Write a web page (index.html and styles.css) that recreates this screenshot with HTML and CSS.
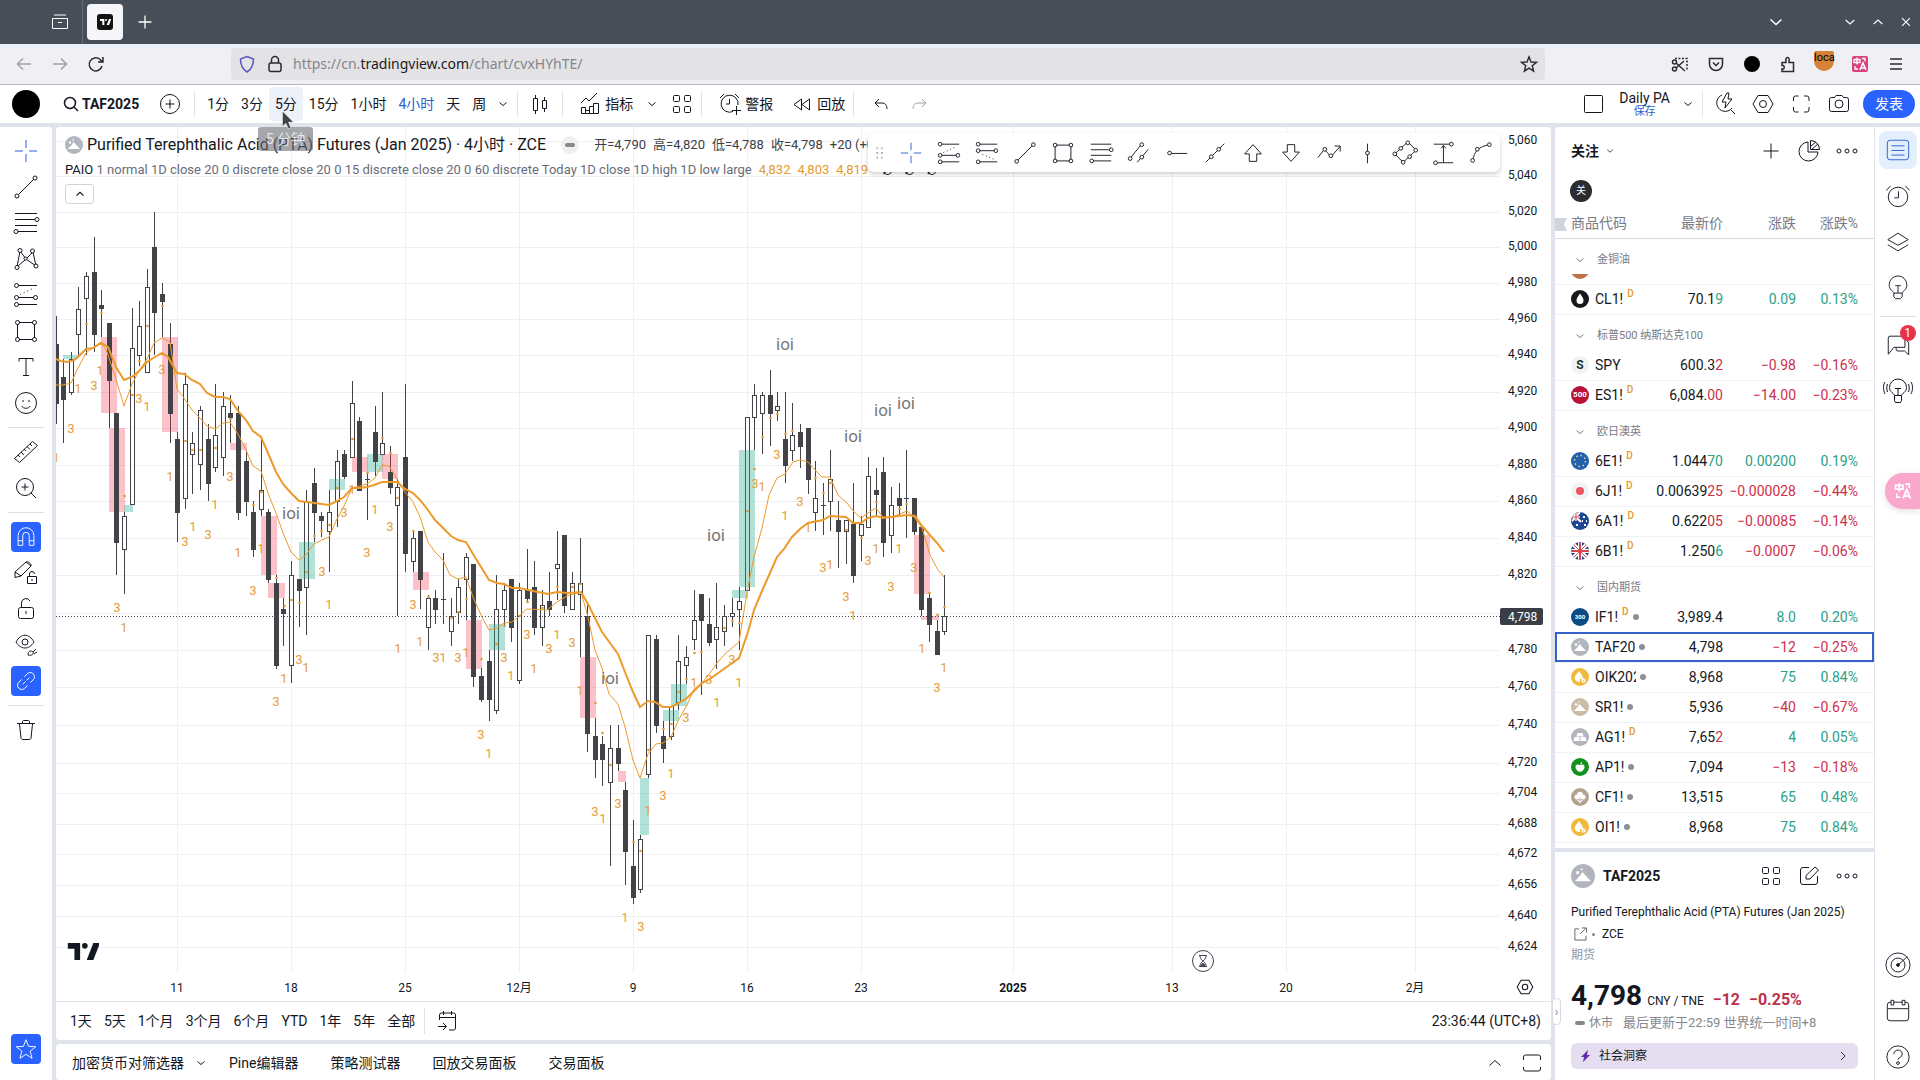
FILE: index.html
```html
<!DOCTYPE html>
<html lang="zh-CN">
<head>
<meta charset="utf-8">
<title>TAF2025 4,798</title>
<link rel="stylesheet" href="styles.css">
</head>
<body>
<svg class="defs" aria-hidden="true">
  <symbol id="cross" viewBox="0 0 28 28"><path d="M14 3v8M14 17v8M3 14h8M17 14h8"/></symbol>
  <symbol id="line" viewBox="0 0 28 28"><circle cx="5" cy="23" r="2"/><circle cx="23" cy="5" r="2"/><path d="M6.500 21.500l15-15"/></symbol>
  <symbol id="fib" viewBox="0 0 28 28"><path d="M3 4.500h22M3 10.500h20M3 16.500h22M5 22.500h20"/><circle cx="25" cy="10.500" r="2" class="bg"/><circle cx="4" cy="22.500" r="2" class="bg"/></symbol>
  <symbol id="xabcd" viewBox="0 0 28 28"><path d="M5 22L8 6l6 8 7-7 3 14-10-7z"/><circle cx="5" cy="22.500" r="2" class="bg"/><circle cx="8" cy="5.500" r="2" class="bg"/><circle cx="20.500" cy="6" r="2" class="bg"/><circle cx="24" cy="21" r="2" class="bg"/><circle cx="13.500" cy="13.500" r="1.500" class="bg"/></symbol>
  <symbol id="forecast" viewBox="0 0 28 28"><path d="M6 4.500h19M6 16.500h16M6 23.500h19"/><path d="M8 13.500L22 7" stroke-dasharray="1 3"/><circle cx="4.500" cy="4.500" r="2"/><circle cx="4.500" cy="16.500" r="2"/><circle cx="4.500" cy="23.500" r="2"/><circle cx="23.500" cy="16.500" r="2"/></symbol>
  <symbol id="forecast2" viewBox="0 0 28 28"><path d="M6 4.500h19M6 11.500h16M6 23.500h19"/><path d="M9 15.500L22 21" stroke-dasharray="1 3"/><circle cx="4.500" cy="4.500" r="2"/><circle cx="4.500" cy="11.500" r="2"/><circle cx="4.500" cy="23.500" r="2"/><circle cx="23.500" cy="11.500" r="2"/></symbol>
  <symbol id="rect" viewBox="0 0 28 28"><path d="M7 5.500h14M7 22.500h14M5.500 7v14M22.500 7v14"/><circle cx="5.500" cy="5.500" r="2"/><circle cx="22.500" cy="5.500" r="2"/><circle cx="5.500" cy="22.500" r="2"/><circle cx="22.500" cy="22.500" r="2"/></symbol>
  <symbol id="text" viewBox="0 0 28 28"><path d="M7 8.500V5.500h14v3M14 5.500v17M11 22.500h6"/></symbol>
  <symbol id="smile" viewBox="0 0 28 28"><circle cx="14" cy="14" r="10.500"/><path d="M10 17c1 3 7 3 8 0M11 11v2M17 11v2"/></symbol>
  <symbol id="ruler" viewBox="0 0 28 28"><path d="M2.500 20.500l18-17 5 4-18 17zM6 17l2 2M9 14l3 3M12 11l2 2M15 8.500l3 3M18 6l2 2"/></symbol>
  <symbol id="zoom" viewBox="0 0 28 28"><circle cx="13" cy="13" r="8.500"/><path d="M19 19l5 5M13 9.500v7M9.500 13h7"/></symbol>
  <symbol id="magnet" viewBox="0 0 28 28"><path d="M5.500 23V12.500a8.500 8.500 0 0 1 17 0V23h-5V12.500a3.500 3.500 0 0 0-7 0V23zM5.500 18h5M17.500 18h5"/></symbol>
  <symbol id="penlock" viewBox="0 0 28 28"><path d="M3 13l11-10c2-1 6 2 5 4L9 17l-6 1.500zM3 13l6 4M14 3l5 4"/><path d="M15.500 17.500h9v7h-9zM17.500 17v-2a2.500 2.500 0 0 1 5 0M20 20v2"/></symbol>
  <symbol id="lock" viewBox="0 0 28 28"><rect x="6.500" y="12.500" width="15" height="11" rx="2"/><path d="M9.500 12V8a4.500 4.500 0 0 1 8.500-2M14 16v3"/></symbol>
  <symbol id="eye" viewBox="0 0 28 28"><path d="M4 11c5-9 13-9 18 0-5 8-13 8-18 0z"/><circle cx="13" cy="11" r="3"/><path d="M16 24c0-4 3-5 5-3 1 2-1 4-5 3zM21 21l3-3M22 23l3-2"/></symbol>
  <symbol id="link" viewBox="0 0 28 28"><g transform="rotate(-45 14 14)"><path d="M12 9.500H7.500a4.500 4.500 0 0 0 0 9H12M16 9.500h4.500a4.500 4.500 0 0 1 0 9H16M9 14h4M15 14h4"/></g></symbol>
  <symbol id="trash" viewBox="0 0 28 28"><path d="M5 7.500h18M10.500 7V5.500c0-1 1-1 1-1h5s1 0 1 1V7M7.500 8l1.500 14c0 1 1 1.500 2 1.500h6c1 0 2-.5 2-1.500L20.500 8"/></symbol>
  <symbol id="star" viewBox="0 0 28 28"><path d="M14 4l2.800 7.200 7.700.4-6 4.800 2 7.600-6.500-4.300L7.500 24l2-7.600-6-4.800 7.700-.4z"/></symbol>
  <symbol id="channel" viewBox="0 0 28 28"><path d="M5 19L16 5.500M12 24L24 10"/><circle cx="4.500" cy="20" r="2" class="bg"/><circle cx="17" cy="5" r="2" class="bg"/><circle cx="17" cy="18.500" r="2" class="bg"/></symbol>
  <symbol id="ray" viewBox="0 0 28 28"><circle cx="6" cy="14" r="2"/><path d="M8 14.500h17"/></symbol>
  <symbol id="extline" viewBox="0 0 28 28"><path d="M4 24L24 4"/><circle cx="10" cy="18" r="2" class="bg"/><circle cx="18" cy="10" r="2" class="bg"/></symbol>
  <symbol id="arrowup" viewBox="0 0 28 28"><path d="M14 5l9 10h-5v8h-8v-8H5z"/></symbol>
  <symbol id="arrowdown" viewBox="0 0 28 28"><path d="M14 23l9-10h-5V5h-8v8H5z"/></symbol>
  <symbol id="path" viewBox="0 0 28 28"><path d="M2 19l7-9 7 8L26 7M20 6.500h6v6"/><circle cx="9.500" cy="10" r="2" class="bg"/><circle cx="16" cy="17" r="2" class="bg"/></symbol>
  <symbol id="vline" viewBox="0 0 28 28"><path d="M14.500 4v21"/><circle cx="14.500" cy="14" r="2" class="bg"/></symbol>
  <symbol id="rotrect" viewBox="0 0 28 28"><path d="M3 15L17 2l9 9-14 13z"/><circle cx="3" cy="15" r="2" class="bg"/><circle cx="17" cy="3" r="2" class="bg"/><circle cx="25.500" cy="11" r="2" class="bg"/><circle cx="12" cy="24" r="2" class="bg"/><circle cx="9.500" cy="9" r="2" class="bg"/><circle cx="19" cy="18" r="2" class="bg"/></symbol>
  <symbol id="range" viewBox="0 0 28 28"><path d="M4 4.500h17M8 24.500h17M14.500 24V6M12 9l2.500-3L17 9"/><circle cx="23" cy="4.500" r="2"/><circle cx="6" cy="24.500" r="2"/></symbol>
  <symbol id="curve" viewBox="0 0 28 28"><path d="M5 22c2-9 5-15 19-17"/><circle cx="5" cy="22" r="2" class="bg"/><circle cx="10" cy="10" r="2" class="bg"/><circle cx="23" cy="5" r="2" class="bg"/></symbol>
  <symbol id="grip" viewBox="0 0 28 28"><path d="M11 8v13M16 8v13" stroke-dasharray="2 3" stroke-width="2"/></symbol>
  <symbol id="search" viewBox="0 0 28 28"><circle cx="13" cy="13" r="5.500"/><path d="M17 17l4 4"/></symbol>
  <symbol id="pluscircle" viewBox="0 0 28 28"><circle cx="14" cy="14" r="9.500"/><path d="M14 9.500v9M9.500 14h9"/></symbol>
  <symbol id="chev" viewBox="0 0 28 28"><path d="M10.500 12.500l3.500 3 3.500-3"/></symbol>
  <symbol id="chevbig" viewBox="0 0 28 28"><path d="M8.500 11.500l5.500 5 5.500-5"/></symbol>
  <symbol id="chevup" viewBox="0 0 28 28"><path d="M8.500 16.500l5.500-5 5.500 5"/></symbol>
  <symbol id="close" viewBox="0 0 28 28"><path d="M9 9l10 10M19 9L9 19"/></symbol>
  <symbol id="plus" viewBox="0 0 28 28"><path d="M14 6.500v15M6.500 14h15"/></symbol>
  <symbol id="candles" viewBox="0 0 28 28"><path d="M7.500 8.500h4v12h-4zM9.500 5v3.500M9.500 20.500V24M16.500 10.500h4v8h-4zM18.500 7v3.500M18.500 18.500V22"/></symbol>
  <symbol id="indic" viewBox="0 0 28 28"><path d="M5.500 17.500h4v6h-4zM9.500 20.500h4v3h-4zM13.500 16.500h4v7h-4zM17.500 13.500h5v10h-5zM5 13l5-5 3 3 8-8"/></symbol>
  <symbol id="tiles" viewBox="0 0 28 28"><rect x="5.500" y="5.500" width="6" height="6" rx="1"/><rect x="16.500" y="5.500" width="6" height="6" rx="1"/><rect x="5.500" y="16.500" width="6" height="6" rx="1"/><rect x="16.500" y="16.500" width="6" height="6" rx="1"/></symbol>
  <symbol id="alarmadd" viewBox="0 0 28 28"><path d="M17 21.500A8.500 8.500 0 1 1 22 15M13.500 9v5H10M4 8l4-4M19 4l4 4M20.500 16v9M16 20.500h9"/></symbol>
  <symbol id="rewind" viewBox="0 0 28 28"><path d="M13.500 9v11L6 14.500zM21.500 9v11L14 14.500z"/></symbol>
  <symbol id="undo" viewBox="0 0 28 28"><path d="M12 9l-4 4 4 4M8 13h7c3 0 5 2 5 6"/></symbol>
  <symbol id="redo" viewBox="0 0 28 28"><path d="M17 9l4 4-4 4M21 13h-8c-3 0-5 2-5 6"/></symbol>
  <symbol id="square" viewBox="0 0 28 28"><rect x="5.500" y="5.500" width="18" height="17" rx="1"/></symbol>
  <symbol id="flash" viewBox="0 0 28 28"><path d="M11 5a8.500 8.500 0 1 0 10 13M20 20l4 4M16 3l-5 9h4l-1 6 7-9h-4l1-6z"/></symbol>
  <symbol id="hex" viewBox="0 0 28 28"><path d="M9 5.500h10l5 8.500-5 8.500H9L4 14z"/><circle cx="14" cy="14" r="3.500"/></symbol>
  <symbol id="full" viewBox="0 0 28 28"><path d="M6.500 11V8a2 2 0 0 1 2-2h3M17 6h3a2 2 0 0 1 2 2v3M22 17v3a2 2 0 0 1-2 2h-3M11.500 22h-3a2 2 0 0 1-2-2v-3"/></symbol>
  <symbol id="cam" viewBox="0 0 28 28"><path d="M4.500 9.500a2 2 0 0 1 2-2h3l1.500-2h6l1.500 2h3a2 2 0 0 1 2 2v10a2 2 0 0 1-2 2h-15a2 2 0 0 1-2-2z"/><circle cx="14" cy="14" r="4"/></symbol>
  <symbol id="pie" viewBox="0 0 28 28"><path d="M13 5a9.500 9.500 0 1 0 10 10H13z"/><path d="M15.500 12.500V3.500a9 9 0 0 1 9 9zM16 9l5-4M17 12l6-5"/></symbol>
  <symbol id="dots" viewBox="0 0 28 28"><circle cx="6" cy="14" r="2"/><circle cx="14" cy="14" r="2"/><circle cx="22" cy="14" r="2"/></symbol>
  <symbol id="edit" viewBox="0 0 28 28"><path d="M14 5.500H8a2.500 2.500 0 0 0-2.500 2.500v12A2.500 2.500 0 0 0 8 22.500h12a2.500 2.500 0 0 0 2.500-2.500v-6M11 17v-3.500L20 5l3.500 3L15 17z"/></symbol>
  <symbol id="list" viewBox="0 0 28 28"><rect x="2.500" y="3.500" width="23" height="21" rx="3"/><path d="M7 9.500h14M7 14.500h14M7 19.500h14"/></symbol>
  <symbol id="alarm" viewBox="0 0 28 28"><circle cx="14" cy="15" r="10.500"/><path d="M14.500 9v7H10M1.500 8L6 3M22 3l4.500 5"/></symbol>
  <symbol id="layers" viewBox="0 0 28 28"><path d="M3 11.500L14 4.500l11 7-11 6zM3 17l11 6.500L25 17"/></symbol>
  <symbol id="bulb" viewBox="0 0 28 28"><path d="M9.500 19.500c0-2-5-3-5-9a9.500 9.500 0 0 1 19 0c0 6-5 7-5 9zM9.500 19.500v4l2 2h5l2-2v-4M11 11.500h6M14 12v7"/></symbol>
  <symbol id="chat" viewBox="0 0 28 28"><path d="M3.500 24V6.500a2 2 0 0 1 2-2h14a2 2 0 0 1 2 2v10h-12zM12 17v1.500a2 2 0 0 0 2 2h7l4.500 4V12a2 2 0 0 0-2-2"/></symbol>
  <symbol id="live" viewBox="0 0 32 28"><path d="M12.500 18.500c0-2-5-3-5-8a8.500 8.500 0 0 1 17 0c0 5-5 6-5 8zM12.500 18.500v5l1 2h5l1-2v-5M13 11.500h6M16 12v6M3 5c-2 3-2 8 0 12M5.500 7c-1 3-1 5 0 8M29 5c2 3 2 8 0 12M26.500 7c1 3 1 5 0 8"/></symbol>
  <symbol id="target" viewBox="0 0 28 28"><circle cx="14" cy="14" r="13"/><circle cx="14" cy="14" r="7.500"/><path d="M14 14l10-9"/><circle cx="14" cy="14" r="1.500" fill="currentColor"/></symbol>
  <symbol id="cal" viewBox="0 0 28 28"><rect x="2.500" y="4.500" width="23" height="20" rx="3"/><path d="M3 11.500h22"/><path class="bg" d="M6.500 2.500h3v5h-3zM18.500 2.500h3v5h-3z"/></symbol>
  <symbol id="help" viewBox="0 0 28 28"><circle cx="14" cy="14" r="12"/><path d="M9.500 11c0-6 9-6 9 0 0 4-4.500 3-4.500 6"/><circle cx="14" cy="20.500" r="1.500"/></symbol>
  <symbol id="goto" viewBox="0 0 28 28"><path d="M5.500 13V8a2 2 0 0 1 2-2h12a2 2 0 0 1 2 2v13a2 2 0 0 1-2 2H15M5.500 10.500h16M9.500 4v4M17.500 4v4M4 19.500h8M9 16l3.500 3.500L9 23"/></symbol>
  <symbol id="maxi" viewBox="0 0 28 28"><path d="M5.500 11V8a2 2 0 0 1 2-2h13a2 2 0 0 1 2 2v3M22.500 18v2a2 2 0 0 1-2 2h-13a2 2 0 0 1-2-2v-2"/></symbol>
  <symbol id="ext" viewBox="0 0 28 28"><path d="M13 8.500H8.500v12h12V16M14 14l6-6M16 7.500h5v5"/></symbol>
  <symbol id="back" viewBox="0 0 28 28"><path d="M21 14H8M13 8.500L7.500 14l5.500 5.500"/></symbol>
  <symbol id="fwd" viewBox="0 0 28 28"><path d="M7 14h13M15 8.500l5.500 5.500-5.500 5.500"/></symbol>
  <symbol id="reload" viewBox="0 0 28 28"><path d="M20 16a6.500 6.500 0 1 1-2-6.500l2 2M21 7v5h-5"/></symbol>
  <symbol id="shield" viewBox="0 0 28 28"><path d="M14 6.500l6.500 2.500c0 6-1.500 10-6.500 13-5-3-6.500-7-6.500-13z"/></symbol>
  <symbol id="padlock" viewBox="0 0 28 28"><rect x="8" y="13" width="12" height="8.500" rx="2"/><path d="M10.500 13v-3a3.500 3.500 0 0 1 7 0v3"/></symbol>
  <symbol id="store" viewBox="0 0 28 28"><path d="M8 7h12M6.500 10.500h15v10h-15zM12 14.500h4"/></symbol>
  <symbol id="scissors" viewBox="0 0 28 28"><path d="M9 8.500h12v11" stroke-dasharray="2 1.500"/><circle cx="8.500" cy="12" r="2"/><circle cx="8.500" cy="19" r="2"/><path d="M10 13l9 8M10 18l8-7"/></symbol>
  <symbol id="pocket" viewBox="0 0 28 28"><path d="M7.500 8.500h13V14a6.500 6.500 0 0 1-13 0zM11 12.500l3 3 3-3"/></symbol>
  <symbol id="puzzle" viewBox="0 0 28 28"><path d="M8 12.500h4c0-1.500-1-5 1.500-5s1.500 3.500 1.500 5h4.500v9H8v-2.500c3 1 3-4.500 0-3.500z"/></symbol>
  <symbol id="menu" viewBox="0 0 28 28"><path d="M8 9h12M8 14h12M8 19h12"/></symbol>
  <symbol id="tv" viewBox="0 0 36 28"><path fill="currentColor" stroke="none" d="M3 5h13v18H10V11H3zM30 5h7l-7 18h-7z"/><circle cx="21" cy="8" r="3" fill="currentColor" stroke="none"/></symbol>
  <symbol id="mount" viewBox="0 0 18 18"><path fill="#fff" stroke="none" d="M3 13l4-4.500 1.500-2.500 6.500 7z"/><circle cx="5" cy="6.500" r="1.200" fill="#fff" stroke="none"/><circle cx="8" cy="4" r=".8" fill="#fff" stroke="none"/></symbol>
  <symbol id="drop" viewBox="0 0 18 18"><path fill="#fff" stroke="none" d="M9 3.500c2 3 3.500 4.500 3.500 7a3.500 3.500 0 0 1-7 0c0-2.500 1.500-4 3.500-7z"/></symbol>
  <symbol id="oil" viewBox="0 0 18 18"><path fill="#fff" stroke="none" d="M8 3c2 3 4 4.500 4 8H9v3c-6 0-6-5-4-7z"/><circle cx="12.500" cy="12.500" r="2.200" fill="#fff" stroke="none"/><path d="M11.500 13.500l2-2" stroke="#f0b93c"/></symbol>
  <symbol id="bars3" viewBox="0 0 18 18"><path fill="#fff" stroke="none" d="M6.500 5h5l1.200 3.500H5.300zM3.500 9h4.800L9 13H2.500zM9.700 9h4.800l1 4H9.500z"/></symbol>
  <symbol id="apple" viewBox="0 0 18 18"><path fill="#fff" stroke="none" d="M9 7c5-2 5 2 4 4-2 3-3 3-4 2.500-1 .5-2 .5-4-2.500-1-2-1-6 4-4zM9 6.500l1.500-3 .5 2z"/></symbol>
  <symbol id="cotton" viewBox="0 0 18 18"><circle cx="6" cy="9" r="2.500" fill="#fff" stroke="none"/><circle cx="9" cy="6.500" r="2.800" fill="#fff" stroke="none"/><circle cx="12" cy="9" r="2.500" fill="#fff" stroke="none"/><path stroke="#fff" d="M9 8v7M6 12l3 2 3-2"/></symbol>
  <symbol id="eu" viewBox="0 0 18 18"><circle cx="9" cy="9" r="5.500" fill="none" stroke="#ffe066" stroke-width="1.500" stroke-dasharray="1.400 2.900"/></symbol>
  <symbol id="jp" viewBox="0 0 18 18"><circle cx="9" cy="9" r="4" fill="#ef5461" stroke="none"/></symbol>
  <symbol id="uk" viewBox="0 0 18 18"><path d="M2 2l14 14M16 2L2 16M9 0v18M0 9h18" stroke="#fff" stroke-width="4"/><path d="M2 2l14 14M16 2L2 16" stroke="#d8454f"/><path d="M9 0v18M0 9h18" stroke="#d8454f" stroke-width="2"/></symbol>
  <symbol id="au" viewBox="0 0 18 18"><path d="M0 0l10 10M9 0L1 9M0 5h9M5 0v9" stroke="#fff" stroke-width="2"/><path d="M0 5h9M5 0v9" stroke="#d8454f"/><path d="M5 13h2M12 5h2M13 13h2M11 9h1M15 9h1" stroke="#fff" stroke-width="2"/></symbol>
  <symbol id="translate" viewBox="0 0 16 16"><path d="M2 3.500h6v3H2zM5 1.500v7M10 2.500h3v3M3 10v3h3" stroke-width="1.300"/><path d="M8 14l3-7 3 7M9 12h4" stroke-width="1.500"/></symbol>
  <symbol id="hourglass" viewBox="0 0 28 28"><circle cx="14" cy="14" r="10.500" fill="#fff"/><path d="M10 8.500h8M10 19.500h8M11 9c0 3 2 4 3 5-1 1-3 2-3 5M17 9c0 3-2 4-3 5 1 1 3 2 3 5"/><path d="M12 18.500h4l-2-2.500z" fill="currentColor"/></symbol>
</svg>

<header class="tabbar">
  <button class="ib store" aria-label="归档"><svg><use href="#store"/></svg></button>
  <div class="tab"><span class="tvfav"><svg><use href="#tv"/></svg></span></div>
  <button class="ib newtab" aria-label="新标签页"><svg><use href="#plus"/></svg></button>
  <span class="grow"></span>
  <button class="ib alltabs" aria-label="所有标签页"><svg><use href="#chevbig"/></svg></button>
  <button class="ib wbtn" aria-label="最小化"><svg><use href="#chevbig"/></svg></button>
  <button class="ib wbtn" aria-label="最大化"><svg><use href="#chevup"/></svg></button>
  <button class="ib wbtn" aria-label="关闭"><svg><use href="#close"/></svg></button>
</header>

<nav class="navbar">
  <button class="ib nb dim" aria-label="后退"><svg><use href="#back"/></svg></button>
  <button class="ib nb dim" aria-label="前进"><svg><use href="#fwd"/></svg></button>
  <button class="ib nb" aria-label="刷新"><svg><use href="#reload"/></svg></button>
  <div class="url">
    <svg class="shield"><use href="#shield"/></svg><svg><use href="#padlock"/></svg>
    <a href="#chart"><span>https://cn.</span><b>tradingview.com</b><span>/chart/cvxHYhTE/</span></a>
    <span class="grow"></span><svg class="fav"><use href="#star"/></svg>
  </div>
  <div class="exts">
    <button class="ib nb" aria-label="截图"><svg><use href="#scissors"/></svg></button>
    <button class="ib nb" aria-label="Pocket"><svg><use href="#pocket"/></svg></button>
    <button class="ib nb" aria-label="账户"><span class="blackdot"></span></button>
    <button class="ib nb" aria-label="扩展"><svg><use href="#puzzle"/></svg></button>
    <button class="ib nb fox"><span>loca</span></button>
    <button class="ib nb trans" aria-label="翻译"><svg><use href="#translate"/></svg></button>
    <button class="ib nb" aria-label="菜单"><svg><use href="#menu"/></svg></button>
  </div>
</nav>

<div class="topbar">
  <span class="avatar"></span>
  <button class="symbol"><svg><use href="#search"/></svg><b>TAF2025</b></button>
  <button class="ib w38" aria-label="比较"><svg><use href="#pluscircle"/></svg></button>
  <i class="sep first"></i>
  <button class="iv">1分</button><button class="iv">3分</button><button class="iv hover">5分</button><button class="iv">15分</button><button class="iv">1小时</button><button class="iv on">4小时</button><button class="iv">天</button><button class="iv">周</button>
  <button class="ib w22" aria-label="更多周期"><svg><use href="#chev"/></svg></button>
  <i class="sep"></i>
  <button class="ib w38" aria-label="K线"><svg><use href="#candles"/></svg></button>
  <i class="sep"></i>
  <button class="lab"><svg><use href="#indic"/></svg>指标</button>
  <button class="ib w38" aria-label="指标模板"><svg><use href="#chev"/></svg></button>
  <button class="ib w22" aria-label="布局"><svg><use href="#tiles"/></svg></button>
  <i class="sep wide"></i>
  <button class="lab alert"><svg><use href="#alarmadd"/></svg>警报</button>
  <button class="lab replay"><svg><use href="#rewind"/></svg>回放</button>
  <i class="sep wide"></i>
  <button class="ib w38" aria-label="撤销"><svg><use href="#undo"/></svg></button>
  <button class="ib w38 dim" aria-label="重做"><svg><use href="#redo"/></svg></button>
  <span class="grow"></span>
  <button class="ib w38" aria-label="布局设置"><svg><use href="#square"/></svg></button>
  <button class="layout"><span>Daily PA</span><small>保存</small></button>
  <button class="ib w22" aria-label="管理布局"><svg><use href="#chev"/></svg></button>
  <i class="sep"></i>
  <button class="ib w38" aria-label="快速搜索"><svg><use href="#flash"/></svg></button>
  <button class="ib w38" aria-label="设置"><svg><use href="#hex"/></svg></button>
  <button class="ib w38" aria-label="全屏"><svg><use href="#full"/></svg></button>
  <button class="ib w38" aria-label="快照"><svg><use href="#cam"/></svg></button>
  <button class="publish">发表</button>
</div>

<div class="main">
  <aside class="tools">
    <button class="tool blue" aria-label="十字"><svg><use href="#cross"/></svg></button>
    <button class="tool" aria-label="趋势线"><svg><use href="#line"/></svg></button>
    <button class="tool" aria-label="斐波那契"><svg><use href="#fib"/></svg></button>
    <button class="tool" aria-label="形态"><svg><use href="#xabcd"/></svg></button>
    <button class="tool" aria-label="预测"><svg><use href="#forecast"/></svg></button>
    <button class="tool" aria-label="矩形"><svg><use href="#rect"/></svg></button>
    <button class="tool" aria-label="文字"><svg><use href="#text"/></svg></button>
    <button class="tool" aria-label="图标"><svg><use href="#smile"/></svg></button>
    <hr>
    <button class="tool" aria-label="测量"><svg><use href="#ruler"/></svg></button>
    <button class="tool" aria-label="放大"><svg><use href="#zoom"/></svg></button>
    <hr>
    <button class="tool" aria-label="磁铁"><span class="fill"><svg><use href="#magnet"/></svg></span></button>
    <button class="tool" aria-label="保持绘图"><svg><use href="#penlock"/></svg></button>
    <button class="tool" aria-label="锁定"><svg><use href="#lock"/></svg></button>
    <button class="tool" aria-label="隐藏"><svg><use href="#eye"/></svg></button>
    <button class="tool" aria-label="同步"><span class="fill"><svg><use href="#link"/></svg></span></button>
    <hr>
    <button class="tool" aria-label="删除"><svg><use href="#trash"/></svg></button>
    <span class="grow"></span>
    <button class="tool last" aria-label="收藏工具栏"><span class="fill"><svg><use href="#star"/></svg></span></button>
  </aside>

  <div class="center">
    <section class="chartbox" id="chart">
      <div class="plot">
        <svg class="plotsvg" id="plot" viewBox="56 127 1495 874" preserveAspectRatio="xMinYMin meet"></svg>
        <div class="legend">
          <div class="l1">
            <span class="logo gray"><svg><use href="#mount"/></svg></span>
            <span class="title">Purified Terephthalic Acid (PTA) Futures (Jan 2025) · 4小时 · ZCE</span>
            <span class="status"><i></i></span>
            <span class="ohlc"><span>开=4,790</span><span>高=4,820</span><span>低=4,788</span><span>收=4,798</span><span>+20 (+0.42%)</span></span>
          </div>
          <div class="l2"><span><b>PAIO</b> 1 normal 1D close 20 0 discrete close 20 0 15 discrete close 20 0 60 discrete Today 1D close 1D high 1D low large</span><em>4,832</em><em>4,803</em><em>4,819</em><span class="nil"><span>∅</span><span>∅</span><span>∅</span></span></div>
          <button class="fold" aria-label="收起"><svg><use href="#chevup"/></svg></button>
        </div>
        <div class="floatbar">
          <span class="grip"><svg><use href="#grip"/></svg></span>
          <button class="blue" aria-label="十字"><svg><use href="#cross"/></svg></button>
          <button aria-label="多头"><svg><use href="#forecast"/></svg></button>
          <button aria-label="空头"><svg><use href="#forecast2"/></svg></button>
          <button aria-label="趋势线"><svg><use href="#line"/></svg></button>
          <button aria-label="矩形"><svg><use href="#rect"/></svg></button>
          <button aria-label="斐波那契"><svg><use href="#fib"/></svg></button>
          <button aria-label="平行通道"><svg><use href="#channel"/></svg></button>
          <button aria-label="水平射线"><svg><use href="#ray"/></svg></button>
          <button aria-label="延长线"><svg><use href="#extline"/></svg></button>
          <button aria-label="向上箭头"><svg><use href="#arrowup"/></svg></button>
          <button aria-label="向下箭头"><svg><use href="#arrowdown"/></svg></button>
          <button aria-label="路径"><svg><use href="#path"/></svg></button>
          <button aria-label="垂直线"><svg><use href="#vline"/></svg></button>
          <button aria-label="旋转矩形"><svg><use href="#rotrect"/></svg></button>
          <button aria-label="价格范围"><svg><use href="#range"/></svg></button>
          <button aria-label="曲线"><svg><use href="#curve"/></svg></button>
        </div>
        <svg class="tvlogo"><use href="#tv"/></svg>
        <svg class="axisgear"><use href="#hex"/></svg>
      </div>
      <div class="rangebar">
        <button>1天</button><button>5天</button><button>1个月</button><button>3个月</button><button>6个月</button><button>YTD</button><button>1年</button><button>5年</button><button>全部</button>
        <i class="sep"></i>
        <button class="ib" aria-label="前往"><svg><use href="#goto"/></svg></button>
        <span class="grow"></span>
        <button>23:36:44 (UTC+8)</button>
      </div>
    </section>
    <footer class="dock">
      <button>加密货币对筛选器<svg><use href="#chev"/></svg></button>
      <button>Pine编辑器</button><button>策略测试器</button><button>回放交易面板</button><button>交易面板</button>
      <span class="grow"></span>
      <button class="ib w38" aria-label="展开"><svg><use href="#chevup"/></svg></button>
      <button class="ib w38" aria-label="最大化"><svg><use href="#maxi"/></svg></button>
    </footer>
  </div>

  <aside class="panel">
    <button class="handle" aria-label="收起面板">›</button>
    <section class="watch">
      <div class="whead"><b>关注</b><svg class="s22"><use href="#chev"/></svg><span class="grow"></span>
        <button class="ib w38" aria-label="添加"><svg><use href="#plus"/></svg></button><button class="ib w38" aria-label="高级视图"><svg><use href="#pie"/></svg></button><button class="ib w38" aria-label="更多"><svg><use href="#dots"/></svg></button></div>
      <div class="wtag"><span>关</span></div>
      <table>
        <colgroup><col class="c1"><col class="c2"><col class="c3"><col class="c4"></colgroup>
        <thead><tr><th>商品代码</th><th>最新价</th><th>涨跌</th><th>涨跌%</th></tr></thead>
        <tbody>
          <tr class="grp"><th colspan="4"><svg><use href="#chev"/></svg>金铜油</th></tr>
          <tr class="cut"><td colspan="4"><div><span class="logo copper"></span></div></td></tr>
          <tr><td><div class="sym"><span class="logo black"><svg><use href="#drop"/></svg></span><span>CL1!</span><sup>D</sup></div></td><td>70.1<i class="up">9</i></td><td class="up">0.09</td><td class="up">0.13%</td></tr>
          <tr class="grp"><th colspan="4"><svg><use href="#chev"/></svg>标普500 纳斯达克100</th></tr>
          <tr><td><div class="sym"><span class="logo spy">S</span><span>SPY</span></div></td><td>600.3<i class="dn">2</i></td><td class="dn">−0.98</td><td class="dn">−0.16%</td></tr>
          <tr><td><div class="sym"><span class="logo red">500</span><span>ES1!</span><sup>D</sup></div></td><td>6,084.<i class="dn">00</i></td><td class="dn">−14.00</td><td class="dn">−0.23%</td></tr>
          <tr class="grp"><th colspan="4"><svg><use href="#chev"/></svg>欧日澳英</th></tr>
          <tr><td><div class="sym"><span class="logo eu"><svg><use href="#eu"/></svg></span><span>6E1!</span><sup>D</sup></div></td><td>1.044<i class="up">70</i></td><td class="up">0.00200</td><td class="up">0.19%</td></tr>
          <tr><td><div class="sym"><span class="logo spy"><svg><use href="#jp"/></svg></span><span>6J1!</span><sup>D</sup></div></td><td>0.00639<i class="dn">25</i></td><td class="dn">−0.000028</td><td class="dn">−0.44%</td></tr>
          <tr><td><div class="sym"><span class="logo navy"><svg><use href="#au"/></svg></span><span>6A1!</span><sup>D</sup></div></td><td>0.622<i class="dn">05</i></td><td class="dn">−0.00085</td><td class="dn">−0.14%</td></tr>
          <tr><td><div class="sym"><span class="logo navy"><svg><use href="#uk"/></svg></span><span>6B1!</span><sup>D</sup></div></td><td>1.250<i class="up">6</i></td><td class="dn">−0.0007</td><td class="dn">−0.06%</td></tr>
          <tr class="grp"><th colspan="4"><svg><use href="#chev"/></svg>国内期货</th></tr>
          <tr><td><div class="sym"><span class="logo blue3">300</span><span>IF1!</span><sup>D</sup><u></u></div></td><td>3,989.4</td><td class="up">8.0</td><td class="up">0.20%</td></tr>
          <tr class="sel"><td><div class="sym"><span class="logo gray"><svg><use href="#mount"/></svg></span><span class="nm">TAF20</span><u></u></div></td><td>4,798</td><td class="dn">−12</td><td class="dn">−0.25%</td></tr>
          <tr><td><div class="sym"><span class="logo gold"><svg><use href="#oil"/></svg></span><span class="nm">OIK2025</span><u></u></div></td><td>8,968</td><td class="up">75</td><td class="up">0.84%</td></tr>
          <tr><td><div class="sym"><span class="logo sand"><svg><use href="#mount"/></svg></span><span>SR1!</span><u></u></div></td><td>5,936</td><td class="dn">−40</td><td class="dn">−0.67%</td></tr>
          <tr><td><div class="sym"><span class="logo gray"><svg><use href="#bars3"/></svg></span><span>AG1!</span><sup>D</sup></div></td><td>7,65<i class="dn">2</i></td><td class="up">4</td><td class="up">0.05%</td></tr>
          <tr><td><div class="sym"><span class="logo green"><svg><use href="#apple"/></svg></span><span>AP1!</span><u></u></div></td><td>7,094</td><td class="dn">−13</td><td class="dn">−0.18%</td></tr>
          <tr><td><div class="sym"><span class="logo brown"><svg><use href="#cotton"/></svg></span><span>CF1!</span><u></u></div></td><td>13,515</td><td class="up">65</td><td class="up">0.48%</td></tr>
          <tr><td><div class="sym"><span class="logo gold"><svg><use href="#oil"/></svg></span><span>OI1!</span><u></u></div></td><td>8,968</td><td class="up">75</td><td class="up">0.84%</td></tr>
        </tbody>
      </table>
      <i class="flag"></i>
    </section>
    <section class="detail">
      <div class="dhead"><span class="logo big gray"><svg><use href="#mount"/></svg></span><b>TAF2025</b><span class="grow"></span>
        <button class="ib w38" aria-label="视图"><svg><use href="#tiles"/></svg></button><button class="ib w38" aria-label="备注"><svg><use href="#edit"/></svg></button><button class="ib w38" aria-label="更多"><svg><use href="#dots"/></svg></button></div>
      <p>Purified Terephthalic Acid (PTA) Futures (Jan 2025)</p>
      <p class="ex"><svg><use href="#ext"/></svg><i></i>ZCE</p>
      <p class="kind">期货</p>
      <div class="price"><strong>4,798</strong><small>CNY / TNE</small><b>−12</b><b>−0.25%</b></div>
      <p class="state"><i></i><span>休市</span><span>最后更新于22:59 世界统一时间+8</span></p>
      <button class="insight"><svg viewBox="0 0 12 12"><path d="M8 0L1 7h3L3 12l7-7H7z"/></svg>社会洞察<span class="grow"></span><svg viewBox="0 0 12 12" class="arr"><path d="M4 2l4 4-4 4"/></svg></button>
    </section>
  </aside>

  <aside class="rail">
    <button class="active" aria-label="自选表"><svg><use href="#list"/></svg></button>
    <button aria-label="警报"><svg><use href="#alarm"/></svg></button>
    <button aria-label="对象树"><svg><use href="#layers"/></svg></button>
    <button aria-label="观点"><svg><use href="#bulb"/></svg></button>
    <hr>
    <button aria-label="聊天"><svg><use href="#chat"/></svg><span class="badge">1</span></button>
    <button aria-label="直播"><svg class="w32"><use href="#live"/></svg></button>
    <span class="grow"></span>
    <button aria-label="筛选器"><svg><use href="#target"/></svg></button>
    <button aria-label="日历"><svg><use href="#cal"/></svg></button>
    <button aria-label="帮助"><svg><use href="#help"/></svg></button>
    <button class="fab" aria-label="翻译"><svg><use href="#translate"/></svg></button>
  </aside>
</div>

<div class="tip">5 分钟</div>
<svg class="cursor" viewBox="0 0 12 18"><path d="M1 1v14l3-3 2.500 5 2-1L6.500 11H11z"/></svg>
<script src="chart.js"></script>
</body>
</html>
```
FILE: styles.css
```css
* { box-sizing: border-box; }
body { margin: 0; height: 100vh; overflow: hidden; display: flex; flex-direction: column; background: #e0e3eb; color: #131722; font: 14px/20px Roboto, "Noto Sans CJK SC", sans-serif; }
button { border: 0; background: none; padding: 0; margin: 0; font: inherit; color: inherit; display: flex; align-items: center; justify-content: center; white-space: nowrap; flex: none; }
svg { width: 28px; height: 28px; flex: none; fill: none; stroke: currentColor; }
svg .bg { fill: #fff; }
p { margin: 0; }
.defs { position: absolute; width: 0; height: 0; }
.grow { flex: 1; }
.dim { opacity: .4; }
.w38 { width: 38px; }
.w22 { width: 22px; }
.sep { width: 1px; height: 26px; background: #e0e3eb; margin: 0 3px; flex: none; }
.sep.wide { margin: 0 8px; }
.sep.first { margin: 0 6px 0 5px; }

.tabbar { height: 44px; background: #474e57; color: #fff; display: flex; align-items: center; flex: none; }
.store { width: 83px; height: 44px; padding-left: 38px; border-right: 1px solid #666d76; }
.tab { width: 36px; height: 36px; margin-left: 4px; border-radius: 4px; background: #f5f5fa; display: flex; align-items: center; justify-content: center; }
.tvfav { width: 16px; height: 16px; border-radius: 3px; background: #131313; display: flex; align-items: center; justify-content: center; }
.tvfav svg { width: 12px; height: 12px; }
.newtab { width: 44px; }
.newtab svg { width: 24px; height: 24px; stroke-width: 1.500; }
.alltabs { width: 60px; margin-right: 30px; }
.alltabs svg { stroke-width: 1.500; }
.wbtn { width: 28px; }
.wbtn svg { width: 22px; height: 22px; stroke-width: 1.500; }

.navbar { height: 41px; background: #f0f0f4; box-shadow: inset 0 4px #eaf0f9; border-bottom: 1px solid #b8b8bd; display: flex; align-items: center; flex: none; padding: 0 6px; color: #2b2a33; }
.nb { width: 36px; }
.nb svg { stroke-width: 1.500; }
.url { flex: 1; height: 32px; margin: 0 117px; background: #e3e3e6; border-radius: 3px; display: flex; align-items: center; padding: 0 6px 0 2px; font: 14px/20px "Noto Sans", sans-serif; }
.url a { color: #85858d; text-decoration: none; margin-left: 4px; }
.url a b { color: #1c1b22; font-weight: 400; }
.url svg { stroke-width: 1.500; }
.url .fav { width: 20px; height: 20px; stroke-width: 2; }
.shield { color: #5b55c8; }
.exts { display: flex; align-items: center; }
.blackdot { width: 16px; height: 16px; border-radius: 50%; background: #000; }
.fox span { width: 20px; height: 20px; background: #d58238; color: #000; font-size: 11px; line-height: 13px; border-radius: 2px 2px 10px 10px; display: block; margin-bottom: 6px; }
.trans svg { width: 16px; height: 16px; background: #d8427f; color: #fff; border-radius: 2px; }

.topbar { height: 38px; background: #fff; display: flex; align-items: center; flex: none; padding: 0 5px 0 12px; }
.avatar { width: 28px; height: 28px; border-radius: 50%; background: #000; flex: none; margin-right: 17px; }
.symbol svg { margin-right: -3px; stroke-width: 1.500; }
.symbol b { font-weight: 700; }
.symbol { margin-right: 12px; }
.iv { height: 34px; padding: 0 6px; }
.iv.on { color: #2a5fd0; }
.iv.hover { background: #edf1f9; border-radius: 4px; }
.lab { padding-left: 10px; gap: 1px; }
.alert { padding-left: 6px; }
.replay { padding-left: 15px; }
.layout { flex-direction: column; line-height: 16px; padding: 0 7px; }
.layout small { font-size: 11px; line-height: 12px; color: #2a5fd0; }
.publish { width: 52px; height: 28px; border-radius: 14px; background: #2962ff; color: #fff; margin-left: 5px; }

.main { flex: 1; min-height: 0; margin-top: 4px; display: flex; gap: 4px; }
.tools { width: 52px; background: #fff; border-radius: 0 4px 0 0; display: flex; flex-direction: column; align-items: center; padding: 6px 0 13px; }
.tool { width: 52px; height: 36px; }
.blue { color: #2a5fd0; }
hr { width: 36px; border: 0; height: 1px; background: #dcdfe8; margin: 6px 0; flex: none; }
.fill { width: 30px; height: 30px; border-radius: 4px; background: #2962ff; color: #fff; display: flex; align-items: center; justify-content: center; }
.fill svg { width: 26px; height: 26px; }

.center { flex: 1; min-width: 0; display: flex; flex-direction: column; gap: 4px; }
.chartbox { flex: 1; min-height: 0; background: #fff; border-radius: 4px; display: flex; flex-direction: column; overflow: hidden; }
.plot { flex: 1; min-height: 0; position: relative; }
.plotsvg { width: 100%; height: 100%; display: block; stroke: none; }
.grid { stroke: #f0f0f2; }
.last-line { stroke: #434651; stroke-dasharray: 1 2; }
.wick, .hollow, .doji { stroke: #434347; }
.hollow { fill: #fff; fill-opacity: .7; }
.solid { fill: #434347; }
.zone-r { fill: #f23650; fill-opacity: .3; }
.zone-g { fill: #22ab8c; fill-opacity: .35; }
.ma { fill: none; stroke: #ed9a2b; stroke-width: 2; }
.ma.thin { stroke-width: 1; }
.dot { fill: #dd9a35; }
.num { fill: #e5a03c; font-size: 13px; text-anchor: middle; }
.note { fill: #77777a; font-size: 17px; text-anchor: middle; }
.axis { fill: #131722; font-size: 12px; }
.mid { text-anchor: middle; }
.strong { font-weight: 700; }
.tag { fill: #3a3e47; }
.tagtext { fill: #fff; font-size: 12px; }
.legend { position: absolute; left: 9px; top: 7px; }
.l1 { display: flex; align-items: center; height: 22px; }
.title { font-size: 16px; margin-left: 4px; white-space: nowrap; }
.status { width: 18px; height: 18px; border-radius: 50%; background: #efeff0; margin: 0 15px; display: flex; align-items: center; justify-content: center; }
.status i { width: 10px; height: 4px; border-radius: 2px; background: #85878c; }
.ohlc { display: flex; gap: 7px; font-size: 13px; color: #3c3f48; white-space: nowrap; }
.l2 { display: flex; gap: 7px; font-size: 13px; height: 28px; line-height: 28px; color: #6a6d78; white-space: nowrap; }
.l2 b { color: #131722; font-weight: 400; }
.l2 em { color: #e39a2c; font-style: normal; }
.nil { display: flex; gap: 9px; margin-left: 6px; color: #222; }
.fold { width: 29px; height: 20px; border: 1px solid #d1d4dc; border-radius: 3px; background: #fff; }
.fold svg { width: 18px; height: 18px; stroke-width: 2; }
.floatbar { position: absolute; right: 51px; top: 6px; height: 39px; padding: 0; background: #fff; border-radius: 6px; display: flex; align-items: center; box-shadow: 0 2px 4px rgba(0, 0, 0, .2); }
.floatbar button { width: 38px; }
.grip { width: 24px; display: flex; justify-content: center; color: #b2b5be; }
.floatbar svg { width: 26px; height: 26px; }
.tvlogo { position: absolute; left: 9px; bottom: 36px; width: 34px; height: 27px; color: #131722; }
.axisgear { position: absolute; right: 15px; bottom: 3px; width: 22px; height: 22px; stroke-width: 1.300; }
.rangebar { height: 39px; border-top: 1px solid #e0e3eb; display: flex; align-items: center; gap: 12px; padding: 0 10px 0 14px; flex: none; }
.rangebar .sep { margin: 0 -3px; }
.dock { height: 36px; background: #fff; border-radius: 4px; display: flex; align-items: center; gap: 32px; padding: 2px 0 0 16px; flex: none; }
.dock .w38 { margin-left: -33px; }
.dock svg { margin-left: 3px; margin-right: -18px; }
.dock .w38 svg { margin: 0; }

.panel { width: 320px; display: flex; flex-direction: column; gap: 4px; position: relative; margin-right: -4px; border-right: 1px solid #e0e3eb; }
.handle { position: absolute; left: -3px; top: 871px; width: 9px; height: 27px; background: #fff; border: 1px solid #d8dae2; border-radius: 4px; color: #888; font-size: 12px; line-height: 12px; z-index: 2; }
.watch { flex: 1; min-height: 0; background: #fff; border-radius: 4px 0 0 0; position: relative; overflow: hidden; }
.whead { height: 48px; display: flex; align-items: center; padding: 0 8px 0 16px; }
.s22 { width: 22px; }
.wtag { height: 32px; padding: 5px 15px; }
.wtag span { width: 22px; height: 22px; border-radius: 50%; background: #2a2c31; color: #fff; font-size: 10px; display: flex; align-items: center; justify-content: center; }
table { width: 100%; table-layout: fixed; border-collapse: collapse; }
.c1 { width: 92px; }
.c2 { width: 76px; }
.c3 { width: 73px; }
thead th { height: 31px; padding: 1px 0 0; font-weight: 400; text-align: right; color: #787b86; border-bottom: 1px solid #d8dae2; }
thead th:first-child { text-align: left; padding-left: 16px; }
td { height: 30px; padding: 0; text-align: right; border-bottom: 1px solid #f0f1f4; white-space: nowrap; }
td:last-child, thead th:last-child { padding-right: 16px; }
td i { font-style: normal; }
.up { color: #2da086; }
.dn { color: #cc2f4b; }
.grp th { height: 36px; padding: 7px 0 0 11px; text-align: left; font-size: 11px; line-height: 28px; font-weight: 400; color: #787b86; }
.grp svg { width: 28px; vertical-align: middle; margin: 0 3px 0 0; }
.cut td { height: 10px; padding: 0; }
.cut div { height: 5px; margin-bottom: 4px; overflow: hidden; display: flex; align-items: flex-end; padding-left: 16px; }
.sel { outline: 2px solid #3661c9; outline-offset: -2px; }
.sym { display: flex; align-items: center; padding-left: 16px; }
.sym > span + span { margin-left: 6px; overflow: hidden; }
.nm { max-width: 41px; }
sup { color: #e39a2c; font-size: 10px; font-weight: 500; line-height: 10px; margin: 0 0 10px 4px; }
.sym u { width: 6px; height: 6px; border-radius: 50%; background: #8d8f96; margin-left: 4px; }
.logo { width: 18px; height: 18px; border-radius: 50%; flex: none; overflow: hidden; display: flex; align-items: center; justify-content: center; font-size: 8px; font-weight: 700; color: #fff; }
.logo svg { width: 100%; height: 100%; }
.gray { background: #b2b5be; }
.black { background: #17181b; }
.copper { background: #c0714c; }
.spy { background: #f1f3f5; color: #1d3330; font-size: 12px; }
.red { background: #b81237; }
.eu { background: #1f5fae; }
.navy { background: #1c4694; }
.blue3 { background: #0a4a85; font-size: 6px; }
.gold { background: #f0b93c; }
.sand { background: #cbbca8; }
.green { background: #13911f; }
.brown { background: #b3a48f; }
.big { width: 24px; height: 24px; }
.flag { position: absolute; left: 0; top: 91px; width: 12px; height: 13px; background: #d1d4dc; clip-path: polygon(0 0, 100% 0, 75% 50%, 100% 100%, 0 100%); }

.detail { height: 228px; background: #fff; padding: 0 16px; flex: none; }
.dhead { height: 48px; display: flex; align-items: center; margin-right: -8px; }
.dhead b { margin-left: 8px; }
.detail p { font-size: 12px; }
.detail > p:nth-of-type(1) { margin-top: 2px; line-height: 20px; }
.ex { display: flex; align-items: center; height: 24px; }
.ex svg { width: 26px; height: 26px; margin-left: -4px; color: #5c5e66; margin-right: -1px; }
.ex i { width: 3px; height: 3px; border-radius: 50%; background: #888; margin-right: 7px; }
.kind { color: #9598a1; line-height: 18px; }
.price { display: flex; align-items: baseline; height: 40px; padding-top: 12px; margin-top: 6px; line-height: 28px; }
.price strong { font-size: 28px; }
.price small { font-size: 12px; margin: 0 0 0 5px; }
.price b { font-size: 16px; font-weight: 700; color: #b9314b; margin-left: 9px; }
.detail .state { display: flex; align-items: center; font-size: 12px; color: #85878f; height: 18px; margin-top: 4px; }
.state i { width: 10px; height: 4px; border-radius: 2px; background: #85878c; margin: 0 4px; }
.state span + span { margin-left: 10px; font-size: 13px; }
.insight { width: 100%; height: 26px; margin-top: 11px; background: #e5def0; border-radius: 6px; font-size: 12px; padding: 0 9px; gap: 7px; }
.insight svg { width: 12px; height: 12px; fill: #5b2fa8; stroke: none; }
.insight .arr { fill: none; stroke: #333; }

.rail { width: 45px; background: #fff; display: flex; flex-direction: column; align-items: center; position: relative; }
.rail button { width: 38px; height: 46px; position: relative; }
.rail svg { width: 26px; height: 26px; }
.rail hr { margin: 5px 0; }
.rail .w32 { width: 32px; height: 28px; }
.rail .active { height: 38px; margin: 4px 0; border-radius: 8px; background: #e3effd; color: #2a5fd0; }
.rail .grow { min-height: 0; }
.badge { position: absolute; right: 1px; top: 3px; width: 16px; height: 16px; border-radius: 50%; background: #e8334d; color: #fff; font-size: 12px; line-height: 16px; text-align: center; }
.rail .fab { position: absolute; right: 0; top: 346px; width: 35px; height: 36px; border-radius: 18px 0 0 18px; background: #f9a8cb; color: #fff; box-shadow: 0 2px 6px rgba(0, 0, 0, .12); }
.fab svg { width: 20px; height: 20px; }
.tip { position: absolute; left: 258px; top: 127px; width: 55px; height: 24px; border-radius: 3px; background: rgba(105, 108, 118, .6); color: #e6e6e8; line-height: 24px; text-align: center; }
.cursor { position: absolute; left: 281px; top: 110px; width: 14px; height: 20px; fill: #434347; stroke: #fff; stroke-width: .5; }
```
FILE: chart.js
```js
// Candles: [high, body top, body bottom, low, kind]; kind 1 = falling, 0 = rising, 2 = doji
const bars = [
[316,344,404,424,1],[359,377,400,443,1],[352,359,393,395,0],[287,309,335,355,0],[272,276,299,355,0],[237,272,335,352,1],[290,305,309,337,1],[323,323,381,428,1],
[413,413,543,575,1],[512,516,550,594,0],[308,348,505,505,0],[301,326,356,366,0],[269,287,373,373,0],[212,247,313,355,1],[283,294,302,337,1],[323,344,414,443,1],
[432,439,513,542,1],[373,384,499,509,0],[432,443,455,494,0],[406,410,465,490,0],[424,439,484,501,1],[384,435,468,472,0],[392,406,458,476,0],[395,413,418,443,1],
[406,413,513,520,1],[450,461,502,516,1],[501,512,550,557,1],[439,490,510,516,0],[509,512,580,583,1],[575,583,666,669,1],[598,609,614,646,1],[561,575,666,683,0],
[579,579,591,627,1],[490,501,588,635,0],[468,483,513,542,1],[512,516,521,537,1],[490,512,532,572,0],[450,461,502,527,0],[450,454,477,479,1],[381,403,458,458,0],
[417,421,491,491,1],[473,479,479,520,2],[406,432,462,476,1],[392,443,455,455,0],[446,472,488,494,1],[479,487,506,616,0],[384,457,554,572,1],[532,538,562,572,0],
[531,531,580,609,1],[595,598,628,650,0],[590,598,610,624,1],[553,599,599,624,2],[598,616,632,646,0],[579,587,613,624,0],[553,557,580,620,0],[564,564,677,687,1],
[668,676,700,702,1],[650,661,700,721,1],[575,609,711,714,0],[583,590,610,625,0],[579,579,628,642,1],[583,590,681,684,0],[549,590,599,601,1],[561,587,628,635,1],
[590,605,628,646,0],[572,601,610,616,1],[531,564,569,600,0],[535,535,606,613,1],[572,583,610,610,0],[538,583,595,657,0],[605,616,734,752,1],[718,736,760,778,1],
[736,744,760,786,1],[725,748,783,866,0],[725,748,764,771,1],[782,790,852,885,1],[820,866,898,904,1],[835,839,890,893,0],[635,635,775,778,0],[635,639,726,733,1],
[721,736,749,763,1],[706,706,737,740,0],[635,661,703,710,0],[646,657,666,684,0],[590,620,640,650,0],[594,594,621,695,1],[598,624,643,646,1],[583,627,640,669,0],
[605,616,632,646,0],[598,613,617,627,0],[587,601,610,650,0],[417,417,591,591,0],[384,395,418,450,0],[392,395,414,454,0],[370,395,414,446,1],[392,406,411,421,0],
[392,439,466,483,1],[403,435,451,461,0],[424,432,447,468,1],[428,428,480,494,1],[461,498,513,531,0],[483,505,505,535,2],[450,479,502,531,0],[501,520,532,568,1],
[520,520,532,564,0],[483,524,576,583,1],[516,524,536,561,0],[457,476,528,528,0],[468,490,495,516,1],[457,472,543,557,1],[487,505,536,553,0],[483,498,506,516,1],
[450,498,498,538,2],[498,498,532,535,1],[527,527,610,616,1],[594,598,625,642,1],[620,631,655,655,1],[575,616,632,635,0]
];
const first = -16;
const xOf = i => Math.round(177.15 + 7.595 * (i + first));

// Gap zones: [x1, x2, y1, y2, colour]
const zones = [
[63,78,355,359,'g'],[101,117,337,413,'r'],[109,125,428,512,'r'],[124,133,505,512,'g'],[162,178,337,432,'r'],[230,247,443,450,'r'],[261,277,516,575,'r'],[268,285,583,598,'r'],
[299,315,542,579,'g'],[329,345,479,490,'g'],[352,368,457,472,'r'],[367,383,454,472,'g'],[382,398,454,479,'r'],[413,429,572,590,'r'],[466,482,620,669,'r'],[489,505,624,650,'g'],
[580,596,657,718,'r'],[618,626,771,782,'r'],[640,649,778,835,'g'],[663,679,710,721,'g'],[671,687,684,706,'g'],[732,748,590,598,'g'],[739,755,450,587,'g'],[914,930,535,594,'r'],[921,939,616,620,'r']
];
const slow = "56,359 60,361 68,362 74,360 78,357 86,349 93,348 101,343 108,347 116,367 124,380 132,377 139,371 147,362 155,357 162,353 168,357 177,373 184,374 192,380 200,384 207,393 215,397 223,397 230,399 238,411 246,420 253,431 261,437 268,453 276,472 283,484 291,493 299,501 307,502 329,505 337,501 344,497 352,488 360,488 367,487 374,485 382,482 397,482 405,489 413,493 420,500 428,510 435,520 443,528 451,536 458,540 466,542 473,554 481,567 489,580 497,583 504,584 512,588 519,588 533,591 548,594 557,592 567,593 581,592 588,604 595,618 602,632 610,643 618,654 625,672 633,692 640,707 648,701 655,702 663,707 671,707 679,703 687,698 694,691 702,683 710,679 739,658 748,632 754,610 762,591 777,557 784,549 792,537 800,529 808,523 823,520 830,516 846,517 853,523 861,523 868,518 876,516 883,518 899,516 907,515 915,516 922,526 937,543 944,552";
const fast = "56,385 63,385 71,383 78,368 86,353 94,347 101,342 107,352 115,376 124,406 132,384 139,371 147,359 154,343 162,338 170,342 177,389 184,398 192,410 200,418 207,426 215,429 223,423 230,422 238,434 245,448 253,466 261,471 268,493 276,513 283,533 291,552 299,560 306,555 314,544 322,540 329,537 337,519 344,506 352,488 367,484 375,478 382,465 389,466 397,479 405,492 413,502 420,517 428,542 435,552 443,560 450,575 458,579 466,577 473,597 482,617 489,630 497,628 504,623 512,622 519,616 527,609 547,610 557,602 567,596 581,592 588,617 595,650 602,668 609,694 618,704 625,727 633,760 640,778 648,754 656,744 663,743 671,737 679,719 687,705 694,689 702,683 710,673 717,663 725,654 739,642 743,617 748,587 754,557 762,528 769,495 777,478 785,474 793,462 800,460 808,462 815,470 822,477 830,477 838,495 847,503 854,512 861,518 868,513 876,508 883,517 892,517 907,511 914,517 922,528 930,555 938,570 944,577";
const dots = [[86,324],[101,313],[162,306],[139,361],[147,326],[124,496],[132,395],[185,441],[192,450],[200,450],[215,448],[261,492],[253,505],[230,419],[284,606],[276,578],[291,600],[299,603],[306,572],[314,536],[321,531],[329,525],[337,488],[352,439],[367,473],[382,438],[390,453],[397,498],[413,531],[428,597],[451,618],[458,612],[466,599],[481,659],[496,644],[504,626],[519,616],[527,602],[542,608],[557,587],[572,587],[580,584],[595,703],[602,733],[610,765],[633,842],[640,851],[648,750],[663,729],[671,724],[678,692],[686,679],[694,653],[701,652],[724,628],[732,621],[739,623],[747,511],[754,469],[762,437],[770,418],[777,414],[785,434],[792,431],[815,478],[823,493],[830,483],[846,530],[861,538],[876,502],[906,504],[899,509],[929,593],[937,615],[944,607]];
const nums = [[1,56,457],[3,71,428],[1,78,388],[3,94,385],[1,100,370],[3,139,398],[1,147,406],[3,162,369],[3,117,607],[1,124,627],[1,170,476],[3,185,541],[1,193,526],[3,208,534],[1,215,504],[3,230,476],[1,238,552],[3,253,590],[1,261,548],[3,276,701],[1,284,678],[3,299,659],[1,306,667],[1,329,604],[3,322,571],[3,344,512],[1,352,489],[3,367,552],[1,375,509],[3,390,526],[1,398,648],[3,413,604],[1,420,641],[3,436,657],[1,443,657],[3,458,657],[1,466,652],[3,481,734],[1,489,753],[3,504,657],[1,511,675],[3,527,634],[1,534,668],[3,549,648],[1,557,634],[3,572,642],[1,580,690],[3,595,811],[1,603,818],[3,618,803],[1,625,917],[3,641,926],[1,648,810],[3,663,795],[1,671,773],[3,686,717],[1,694,682],[3,709,679],[1,717,702],[3,732,659],[1,739,682],[3,755,483],[1,762,486],[3,777,454],[1,785,515],[3,800,501],[1,808,527],[3,823,567],[1,830,564],[3,846,596],[1,853,615],[3,868,560],[1,876,548],[3,891,586],[1,899,548],[3,914,567],[1,922,648],[3,937,687],[1,944,667]];
const notes = [[291,513],[610,678],[716,535],[785,344],[853,436],[883,410],[906,403]];
const prices = {5060:141,5040:176,5020:212,5000:247,4980:283,4960:319,4940:355,4920:392,4900:428,4880:465,4860:501,4840:538,4820:575,4800:613,4780:650,4760:687,4740:725,4720:763,4704:793,4688:824,4672:854,4656:885,4640:916,4624:947};
const days = [['11',177],['18',291],['25',405],['12月',519],['9',633],['16',747],['23',861],['2025',1013],['13',1172],['20',1286],['2月',1415]];

let out = '';
const text = (cls, x, y, s) => `<text class="${cls}" x="${x}" y="${y}">${s}</text>`;
for (const y of Object.values(prices)) out += `<path class="grid" d="M56 ${y + .5}H1500"/>`;
for (const d of days) out += `<path class="grid" d="M${d[1] + .5} 127V973"/>`;
bars.forEach((b, i) => {
  const x = xOf(i), [h, t, m, l, k] = b;
  out += `<path class="wick" d="M${x + .5} ${h}V${k === 0 ? t : l}${k === 0 ? `M${x + .5} ${m}V${l}` : ''}"/>`;
  if (k === 0) out += `<rect class="hollow" x="${x - 1.5}" y="${t + .5}" width="4" height="${Math.max(m - t - 1, 2)}"/>`;
  if (k === 2) out += `<path class="doji" d="M${x - 2} ${t + .5}h5"/>`;
});
for (const z of zones) out += `<rect class="zone-${z[4]}" x="${z[0]}" y="${z[2]}" width="${z[1] - z[0]}" height="${z[3] - z[2]}"/>`;
for (const n of nums) out += text('num', n[1], n[2] + 5, n[0]);
bars.forEach((b, i) => {
  if (b[4] === 1) out += `<rect class="solid" x="${xOf(i) - 2}" y="${b[1]}" width="5" height="${b[2] - b[1]}"/>`;
});
out += `<polyline class="ma" points="${slow}"/><polyline class="ma thin" points="${fast}"/>`;
for (const d of dots) out += `<circle class="dot" cx="${d[0] + .5}" cy="${d[1]}" r="1.3"/>`;
out += '<path class="last-line" d="M56 616.5H1500"/>';
for (const n of notes) out += text('note', n[0], n[1] + 6, 'ioi');
for (const [p, y] of Object.entries(prices)) if (p !== '4800') out += text('axis', 1508, y + 3, Number(p).toLocaleString('en-US'));
out += '<rect class="tag" x="1500" y="608" width="43" height="17" rx="2"/>' + text('tagtext', 1508, 621, '4,798');
for (const d of days) out += text('axis mid' + (d[0] === '2025' ? ' strong' : ''), d[1], 992, d[0]);
out += '<svg x="1189" y="947" width="26" height="26" viewBox="0 0 28 28" stroke="#434651" style="color:#434651"><use href="#hourglass"/></svg>';
document.getElementById('plot').innerHTML = out;
```
